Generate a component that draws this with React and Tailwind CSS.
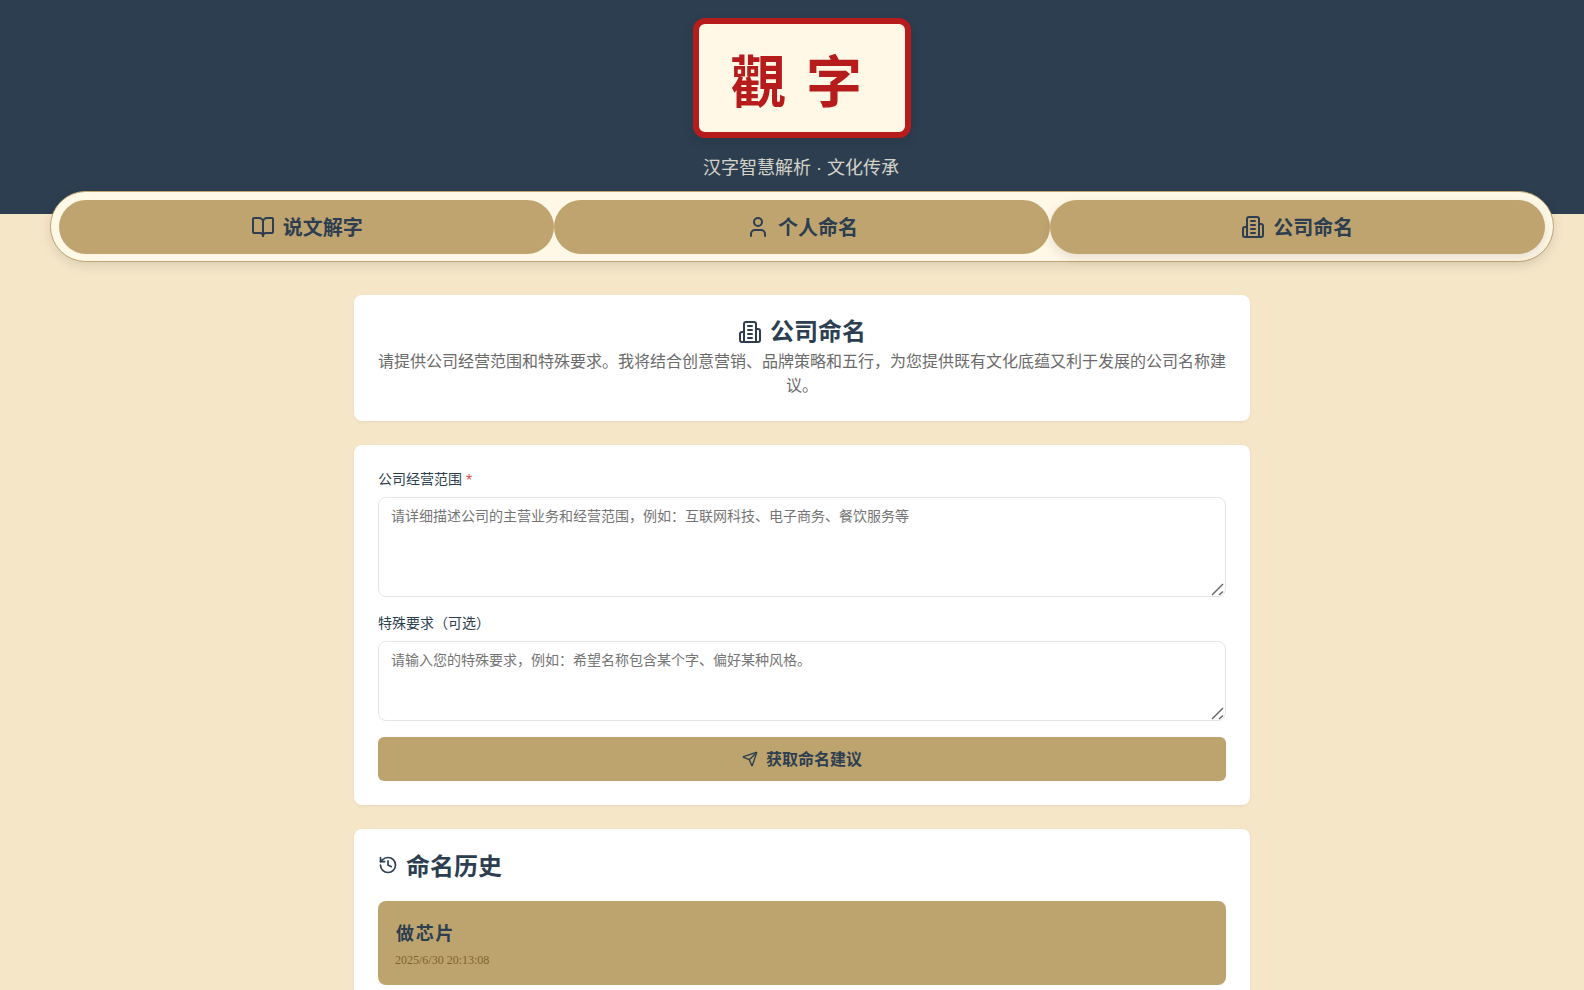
import { BookOpen, User, Send, History } from 'lucide-react'

// older lucide building-2, the one in the picture has a wing on each side
function Building({ size = 24 }) {
  return (
    <svg width={size} height={size} viewBox="0 0 24 24" fill="none" stroke="currentColor" strokeWidth="2" strokeLinecap="round" strokeLinejoin="round">
      <path d="M6 22V4a2 2 0 0 1 2-2h8a2 2 0 0 1 2 2v18Z" />
      <path d="M6 12H4a2 2 0 0 0-2 2v6a2 2 0 0 0 2 2h2" />
      <path d="M18 9h2a2 2 0 0 1 2 2v9a2 2 0 0 1-2 2h-2" />
      <path d="M10 6h4" />
      <path d="M10 10h4" />
      <path d="M10 14h4" />
      <path d="M10 18h4" />
    </svg>
  )
}

function NavTab({ icon: Icon, label, active }) {
  return (
    <button className={`flex-1 h-[54px] flex items-center justify-center gap-2 rounded-full bg-[#bfa46f] text-[#2c3e50] text-[20px] font-bold ${active ? 'shadow-[0_4px_12px_rgba(0,0,0,0.1)]' : ''}`}>
      <Icon size={24} strokeWidth={2} />
      <span className="pt-[2px]">{label}</span>
    </button>
  )
}

function Grip() {
  return (
    <svg className="absolute right-[2px] bottom-[1px] pointer-events-none" width="13" height="13" viewBox="0 0 13 13" fill="none" stroke="#666666" strokeWidth="1.5">
      <path d="M1 12L12 1" />
      <path d="M8 12L12 8.5" />
    </svg>
  )
}

function Field({ placeholder, height }) {
  return (
    <div className="relative mt-2">
      <textarea
        placeholder={placeholder}
        className={`block w-full ${height} px-3 py-2 rounded-lg border border-[#e5e5e5] bg-white text-[14px] leading-[20px] placeholder:text-[#757575] outline-none resize-none`}
      />
      <Grip />
    </div>
  )
}

export default function App() {
  return (
    <div className="h-screen overflow-hidden bg-[#f5e6c8]">
      <div className="w-[1604px] text-[#2c3e50] font-['Liberation_Sans','Noto_Sans_CJK_SC',sans-serif]">
        {/* Header */}
        <header className="h-[214px] bg-[#2c3e50] flex flex-col items-center pt-[18px]">
          <div className="w-[218px] h-[120px] flex items-center justify-center rounded-xl border-[6px] border-[#b71c1c] bg-[#fff8e7] text-[#b71c1c] text-[56px] font-bold tracking-[0.06em] leading-none shadow-[0_4px_12px_rgba(0,0,0,0.1)] font-['Noto_Sans_CJK_TC',serif]">
            <span className="pr-[8px]">觀 字</span>
          </div>
          <p className="mt-[16px] pr-[2px] text-[18px] leading-[28px] text-[#fff8e7] opacity-80">汉字智慧解析 · 文化传承</p>
        </header>

        {/* Tabs */}
        <div className="px-[50px] -mt-[23px]">
          <nav className="flex p-2 h-[71px] rounded-full bg-[#fff8e7] border border-[#bfa46f] shadow-[0_4px_12px_rgba(0,0,0,0.1)]">
            <NavTab icon={BookOpen} label="说文解字" />
            <NavTab icon={User} label="个人命名" />
            <NavTab icon={Building} label="公司命名" active />
          </nav>
        </div>

        <main className="w-[896px] mx-auto mt-[33px] flex flex-col gap-6">
          {/* Intro */}
          <section className="bg-white rounded-lg p-6 h-[126px] shadow-[0_1px_3px_rgba(0,0,0,0.06)] text-center">
            <h2 className="mt-[1px] flex items-center justify-center gap-2 text-[24px] leading-[24px] font-bold">
              <Building size={24} />
              公司命名
            </h2>
            <p className="mt-[6px] text-[16px] leading-[24px] text-[#6b6b6b]">请提供公司经营范围和特殊要求。我将结合创意营销、品牌策略和五行，为您提供既有文化底蕴又利于发展的公司名称建议。</p>
          </section>

          {/* Form */}
          <section className="bg-white rounded-lg p-6 h-[360px] shadow-[0_1px_3px_rgba(0,0,0,0.06)]">
            <label className="block text-[14px] leading-[20px] text-[#2c3e50]">
              公司经营范围 <span className="inline-block translate-y-[2px] text-[#d9534f] text-[16px]">*</span>
            </label>
            <Field height="h-[100px]" placeholder="请详细描述公司的主营业务和经营范围，例如：互联网科技、电子商务、餐饮服务等" />
            <label className="block mt-[16px] text-[14px] leading-[20px] text-[#2c3e50]">特殊要求（可选）</label>
            <Field height="h-[80px]" placeholder="请输入您的特殊要求，例如：希望名称包含某个字、偏好某种风格。" />
            <button className="mt-4 w-full h-[44px] flex items-center justify-center gap-2 rounded-md bg-[#bda46e] text-[16px] font-bold text-[#2c3e50]">
              <Send size={16} strokeWidth={2} />
              <span className="pt-[2px]">获取命名建议</span>
            </button>
          </section>

          {/* History */}
          <section className="bg-white rounded-lg p-6 shadow-[0_1px_3px_rgba(0,0,0,0.06)]">
            <h2 className="h-[24px] flex items-center gap-2 text-[24px] leading-[24px] font-bold">
              <History size={20} strokeWidth={2} />
              <span className="pt-[4px]">命名历史</span>
            </h2>
            <div className="mt-[24px] h-[84px] rounded-lg bg-[#bda46e] pl-[18px] pt-[19px]">
              <div className="text-[18px] leading-[24px] font-bold tracking-[0.1em] font-['Noto_Sans_CJK_SC',serif]">做芯片</div>
              <div className="mt-[8px] -ml-[1px] text-[12px] leading-[16px] text-[#7d6230] font-['Liberation_Serif',serif]">2025/6/30 20:13:08</div>
            </div>
          </section>
        </main>
      </div>
    </div>
  )
}
